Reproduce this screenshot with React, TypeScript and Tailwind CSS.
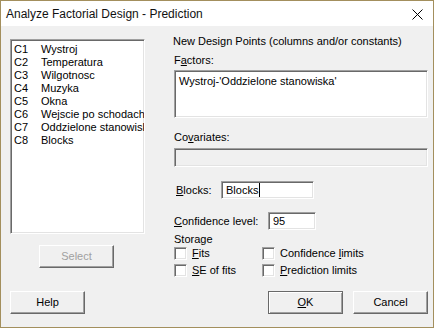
const sunken =
  "border border-t-[#a0a0a0] border-l-[#a0a0a0] border-b-white border-r-white shadow-[inset_1px_1px_0_#696969,inset_-1px_-1px_0_#e3e3e3]";

const raised =
  "border border-t-white border-l-white border-b-[#696969] border-r-[#696969] shadow-[inset_-1px_-1px_0_#a0a0a0] bg-[#f0f0f0]";

const columns = [
  ["C1", "Wystroj"],
  ["C2", "Temperatura"],
  ["C3", "Wilgotnosc"],
  ["C4", "Muzyka"],
  ["C5", "Okna"],
  ["C6", "Wejscie po schodach"],
  ["C7", "Oddzielone stanowiska"],
  ["C8", "Blocks"],
];

function Check({ children }: { children: React.ReactNode }) {
  return (
    <div className="flex items-center h-[13px]">
      <span className={`w-[13px] h-[13px] bg-white shrink-0 ${sunken}`} />
      <span className="ml-[5px] leading-[13px]">{children}</span>
    </div>
  );
}

export default function App() {
  return (
    <div
      className="w-[434px] h-[328px] border border-[#a38f5d] bg-[#f0f0f0] flex flex-col text-[11px] leading-[13px] text-black overflow-hidden"
      style={{ fontFamily: '"Liberation Sans", Arial, sans-serif' }}
    >
      {/* title bar */}
      <div className="h-[25px] bg-white flex items-center justify-between pl-[5px] pr-[10px] shrink-0">
        <span className="text-[12px] leading-[16px] text-[#111]">Analyze Factorial Design - Prediction</span>
        <svg width="11" height="11" viewBox="0 0 11 11" className="mt-[2px]">
          <path d="M0.5 0.5 L10.5 10.5 M10.5 0.5 L0.5 10.5" stroke="#000" strokeWidth="1" />
        </svg>
      </div>

      <div className="flex-1 flex pl-[9px] pr-[5px] pb-[13px]">
        {/* left column */}
        <div className="w-[135px] flex flex-col">
          <div className={`mt-[13px] h-[195px] bg-white pt-[3px] pl-[2px] pr-[2px] overflow-hidden ${sunken}`}>
            {columns.map(([c, name]) => (
              <div key={c} className="flex h-[13px] whitespace-nowrap">
                <span className="w-[28px] shrink-0 pl-[1px]">{c}</span>
                <span>{name}</span>
              </div>
            ))}
          </div>
          <button className={`mt-[11px] ml-[29px] w-[75px] h-[23px] text-[#a0a0a0] ${raised}`}>Select</button>
          <button className={`mt-auto w-[75px] h-[23px] ${raised}`}>Help</button>
        </div>

        {/* right column */}
        <div className="ml-[29px] w-[254px] flex flex-col">
          <div className="mt-[9px] -ml-[1px]">New Design Points (columns and/or constants)</div>
          <div className="mt-[6px]">
            F<span className="underline">a</span>ctors:
          </div>
          <div className={`mt-[3px] h-[48px] bg-white pt-[4px] pl-[4px] ${sunken}`}>Wystroj-'Oddzielone stanowiska'</div>
          <div className="mt-[13px]">
            Co<span className="underline">v</span>ariates:
          </div>
          <div className={`mt-[4px] h-[19px] bg-[#f0f0f0] ${sunken}`} />

          <div className="mt-[14px] flex items-center">
            <span className="w-[47px] pl-[2px]">
              <span className="underline">B</span>locks:
            </span>
            <div className={`w-[93px] h-[18px] bg-white pl-[4px] flex items-center ${sunken}`}>
              Blocks<span className="w-px h-[14px] bg-black ml-[1px]" />
            </div>
          </div>

          <div className="mt-[13px] flex items-center">
            <span className="w-[94px]">
              <span className="underline">C</span>onfidence level:
            </span>
            <div className={`w-[48px] h-[18px] bg-white pl-[4px] flex items-center ${sunken}`}>95</div>
          </div>

          <div className="mt-[3px]">Storage</div>
          <div className="mt-px grid grid-cols-[88px_1fr] gap-y-[4px]">
            <Check>
              <span className="underline">F</span>its
            </Check>
            <Check>
              Confidence <span className="underline">l</span>imits
            </Check>
            <Check>
              <span className="underline">S</span>E of fits
            </Check>
            <Check>
              <span className="underline">P</span>rediction limits
            </Check>
          </div>

          <div className="mt-auto flex justify-end gap-[10px]">
            <button className="w-[75px] h-[23px] bg-[#f0f0f0] border border-[#696969] shadow-[inset_1px_1px_0_#fff,inset_-1px_-1px_0_#a0a0a0]">
              <span className="underline">O</span>K
            </button>
            <button className={`w-[75px] h-[23px] ${raised}`}>Cancel</button>
          </div>
        </div>
      </div>
    </div>
  );
}
